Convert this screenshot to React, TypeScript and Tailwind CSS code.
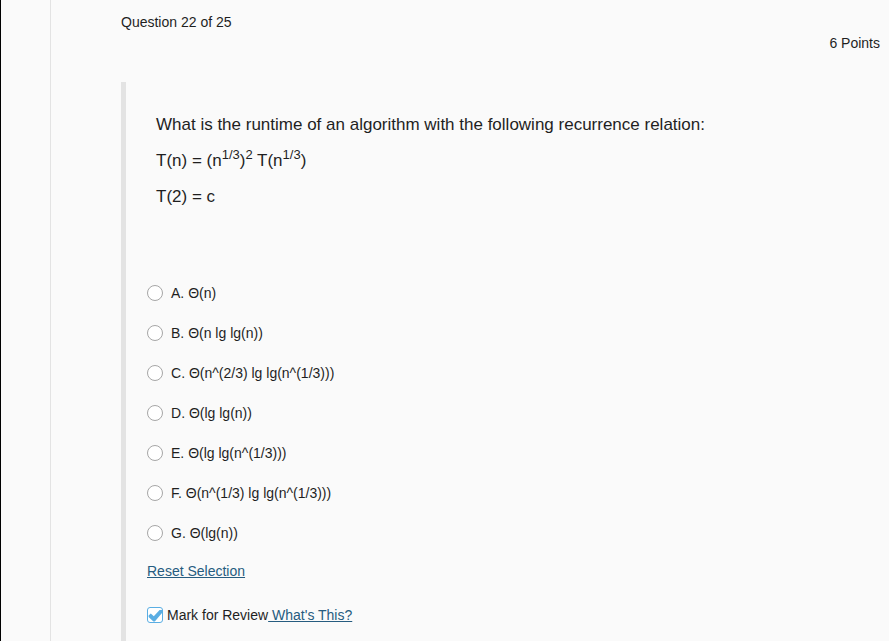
import { useState } from "react";

const options = [
  { id: "A", text: "Θ(n)" },
  { id: "B", text: "Θ(n lg lg(n))" },
  { id: "C", text: "Θ(n^(2/3) lg lg(n^(1/3)))" },
  { id: "D", text: "Θ(lg lg(n))" },
  { id: "E", text: "Θ(lg lg(n^(1/3)))" },
  { id: "F", text: "Θ(n^(1/3) lg lg(n^(1/3)))" },
  { id: "G", text: "Θ(lg(n))" },
];

function Sup({ children }: { children: string }) {
  return <sup className="-top-[7px] text-[13px] leading-none">{children}</sup>;
}

function OptionRow({
  id,
  text,
  checked,
  onSelect,
}: {
  id: string;
  text: string;
  checked: boolean;
  onSelect: () => void;
}) {
  return (
    <label className="flex h-10 items-center gap-2">
      <input
        type="radio"
        name="answer"
        value={id}
        checked={checked}
        onChange={onSelect}
        className="size-4 shrink-0 appearance-none rounded-full border border-[#a6a6a6] bg-white checked:border-[5px] checked:border-[#5aaee3]"
      />
      <span>
        {id}. {text}
      </span>
    </label>
  );
}

export default function App() {
  const [answer, setAnswer] = useState<string | null>(null);
  const [review, setReview] = useState(true);

  return (
    <div className="flex min-h-screen border-l border-black bg-[#fafafa] font-['Liberation_Sans',Arial,sans-serif] text-sm text-[#1f1f1f]">
      <div className="w-[50px] shrink-0 border-r border-[#e3e3e3]" />
      <main className="flex flex-1 flex-col pl-[70px]">
        <header className="pt-3 pr-[9px]">
          <h1>Question 22 of 25</h1>
          <p className="pt-px text-right">6 Points</p>
        </header>
        <section className="mt-[29px] flex-1 border-l-[5px] border-[#e3e3e3] pl-[21px]">
          <div className="flex flex-col gap-3 pt-[31px] pl-[9px] text-[17px] leading-6">
            <p>What is the runtime of an algorithm with the following recurrence relation:</p>
            <p>
              T(n) = (n<Sup>1/3</Sup>)<Sup>2</Sup> T(n<Sup>1/3</Sup>)
            </p>
            <p>T(2) = c</p>
          </div>
          <div role="radiogroup" aria-label="Answers" className="pt-[64px]">
            {options.map((o) => (
              <OptionRow
                key={o.id}
                id={o.id}
                text={o.text}
                checked={answer === o.id}
                onSelect={() => setAnswer(o.id)}
              />
            ))}
          </div>
          <button
            type="button"
            onClick={() => setAnswer(null)}
            className="mt-2 block text-[#265c80] underline"
          >
            Reset Selection
          </button>
          <div className="flex items-center pt-6">
            <label className="flex items-center gap-1">
              <span className="grid size-4 place-items-center">
                <input
                  type="checkbox"
                  checked={review}
                  onChange={(e) => setReview(e.target.checked)}
                  className="peer col-start-1 row-start-1 size-4 appearance-none rounded-[3px] border border-[#5aaee3] bg-white"
                />
                <svg
                  viewBox="0 0 16 16"
                  className="pointer-events-none invisible col-start-1 row-start-1 size-4 fill-[#5aaee3] peer-checked:visible"
                  aria-hidden="true"
                >
                  <path d="M1.6 8.6 3.8 6.6 6.8 9.2 12.6 3H15v3L7.8 14.6H6.4L1.6 10z" />
                </svg>
              </span>
              Mark for Review
            </label>
            <a href="#whats-this" className="whitespace-pre text-[#265c80] underline">
              {" What's This?"}
            </a>
          </div>
        </section>
      </main>
    </div>
  );
}
